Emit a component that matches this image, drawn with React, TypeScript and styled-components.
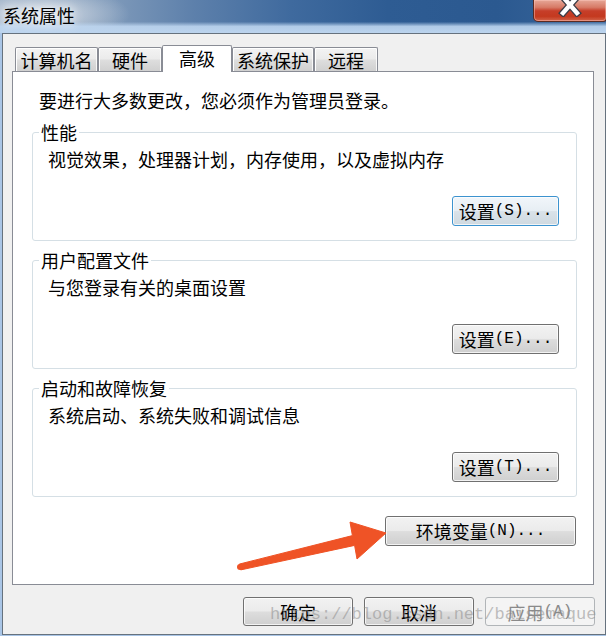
import React from "react";
import styled, { createGlobalStyle, css } from "styled-components";

const GlobalStyle = createGlobalStyle`
  html, body { margin: 0; padding: 0; background: #f0f0f0; }
  body {
    width: 606px; height: 636px; overflow: hidden;
    font-family: "Noto Sans CJK SC", "Microsoft YaHei", sans-serif;
    color: #000;
  }
  * { box-sizing: border-box; }
`;

const Window = styled.div`
  position: relative;
  width: 606px;
  height: 636px;
  display: flex;
  flex-direction: column;
  background: #a9c5e6;
  overflow: hidden;
`;

const TitleBar = styled.div`
  flex: none;
  height: 33px;
  display: flex;
  justify-content: space-between;
  align-items: flex-start;
  background:
    linear-gradient(to bottom, rgba(190, 214, 240, 0) 0%, rgba(190, 214, 240, 0) 66%, rgba(190, 214, 240, 0.9) 80%, #bcd4ee 100%),
    radial-gradient(ellipse 90px 28px at 40px 14px, rgba(225, 230, 236, 0.95), rgba(225, 230, 236, 0) 100%),
    linear-gradient(to right, #8fa6c0 0%, #7f9aba 18%, #5d80ab 32%, #3f6a9e 48%, #2e5c93 64%, #2b5990 82%, #3a679c 100%);
`;

const Title = styled.div`
  padding: 4px 0 0 3px;
  font-size: 18px;
  line-height: 22px;
  color: #000;
  text-shadow: 0 0 8px rgba(255, 255, 255, 0.95), 0 0 14px rgba(255, 255, 255, 0.8);
`;

const CloseButton = styled.div`
  width: 74px;
  height: 22px;
  margin-right: -1px;
  display: flex;
  justify-content: center;
  align-items: flex-start;
  border: 1px solid #5b2a22;
  border-top: none;
  border-radius: 0 0 4px 5px;
  background: linear-gradient(to bottom, #e6a797 0%, #d77a66 35%, #c63e29 52%, #c4391f 78%, #d2644a 100%);
  box-shadow: inset 0 0 0 1px rgba(255, 205, 195, 0.45);
`;

const Body = styled.div`
  flex: 1;
  margin: 0 0 1px 2px;
  border: 1px solid #66727e;
  background: #f0f0f0;
  display: flex;
  flex-direction: column;
  padding: 11px 11px 8px 9px;
`;

const TabStrip = styled.div`
  flex: none;
  height: 26px;
  display: flex;
  align-items: flex-end;
  padding-left: 3px;
`;

const Tab = styled.div<{ $w: number; $active?: boolean }>`
  width: ${(p) => p.$w}px;
  height: 24px;
  display: flex;
  align-items: center;
  justify-content: center;
  border: 1px solid #898c95;
  border-bottom: none;
  border-radius: 2px 2px 0 0;
  background: linear-gradient(to bottom, #f3f3f3 0%, #ebebeb 48%, #dedede 52%, #d0d0d0 100%);
  box-shadow: inset 1px 1px 0 #fff, inset -1px 0 0 rgba(255, 255, 255, 0.8);
  font-size: 18px;
  line-height: 22px;
  white-space: nowrap;
  ${(p) =>
    p.$active &&
    css`
      position: relative;
      z-index: 1;
      height: 27px;
      margin-bottom: -1px;
      padding-bottom: 3px;
      background: #fff;
      box-shadow: none;
    `}
`;

const Panel = styled.div`
  flex: 1;
  display: flex;
  flex-direction: column;
  background: #fff;
  border: 1px solid #898c95;
  padding: 0 16px 0 19px;
`;

const Intro = styled.div`
  margin: 16px 0 0 7px;
  height: 24px;
  font-size: 18px;
  line-height: 24px;
  white-space: nowrap;
`;

const GroupStack = styled.div`
  margin-top: 10px;
  display: flex;
  flex-direction: column;
  gap: 9px;
`;

const Group = styled.fieldset`
  margin: 0;
  min-width: 0;
  padding: 0 17px 14px 0;
  border: 1px solid #d5dfe5;
  border-radius: 3px;
  display: flex;
  flex-direction: column;
`;

const Legend = styled.legend`
  margin-left: 6px;
  padding: 0 2px;
  font-size: 18px;
  line-height: 20px;
`;

const GroupText = styled.div`
  margin: 6px 0 0 15px;
  font-size: 18px;
  line-height: 22px;
  white-space: nowrap;
`;

type Tone = "normal" | "focused" | "disabled";

const Button = styled.button<{ $w: number; $h?: number; $tone?: Tone }>`
  flex: none;
  width: ${(p) => p.$w}px;
  height: ${(p) => p.$h ?? 30}px;
  padding: 0;
  display: flex;
  align-items: center;
  justify-content: center;
  border: 1px solid #707070;
  border-radius: 3px;
  background: linear-gradient(to bottom, #f2f2f2 0%, #ebebeb 48%, #dddddd 52%, #cfcfcf 100%);
  box-shadow: inset 0 0 0 1px rgba(255, 255, 255, 0.75);
  font-family: "Noto Sans CJK SC", sans-serif;
  font-size: 18px;
  line-height: 22px;
  color: #000;
  white-space: nowrap;
  ${(p) =>
    p.$tone === "focused" &&
    css`
      border-color: #3c93cf;
      background: linear-gradient(to bottom, #f1f6fa 0%, #e7eef4 48%, #d9e2e9 52%, #cfd9e0 100%);
      box-shadow: inset 0 0 0 1px rgba(255, 255, 255, 0.7);
    `}
  ${(p) =>
    p.$tone === "disabled" &&
    css`
      border-color: #b1b5b8;
      background: #f4f4f4;
      box-shadow: none;
      color: #8a8a8a;
    `}
`;

const GroupButton = styled(Button)`
  align-self: flex-end;
  margin-top: 26px;
`;

const EnvButton = styled(Button)`
  align-self: flex-end;
  margin: 19px 1px 0 0;
`;

const Accel = styled.span`
  font-family: "Liberation Mono", monospace;
  font-size: 16px;
`;

const DialogButtons = styled.div`
  flex: none;
  margin: 12px -1px 0 0;
  display: flex;
  justify-content: flex-end;
  gap: 11px;
`;

const ArrowMark = styled.svg`
  position: absolute;
  left: 230px;
  top: 512px;
  width: 170px;
  height: 64px;
  pointer-events: none;
`;

const Watermark = styled.div`
  position: absolute;
  left: 270px;
  top: 604px;
  font-family: "Liberation Mono", monospace;
  font-size: 17px;
  line-height: 22px;
  color: rgba(140, 140, 140, 0.55);
  white-space: nowrap;
  pointer-events: none;
`;

const tabs = [
  { label: "计算机名", w: 83 },
  { label: "硬件", w: 64 },
  { label: "高级", w: 70, active: true },
  { label: "系统保护", w: 82 },
  { label: "远程", w: 64 },
];

const groups: { title: string; text: string; key: string; tone: Tone }[] = [
  { title: "性能", text: "视觉效果，处理器计划，内存使用，以及虚拟内存", key: "S", tone: "focused" },
  { title: "用户配置文件", text: "与您登录有关的桌面设置", key: "E", tone: "normal" },
  { title: "启动和故障恢复", text: "系统启动、系统失败和调试信息", key: "T", tone: "normal" },
];

function CloseGlyph() {
  return (
    <svg width="24" height="17" viewBox="0 0 24 17">
      <path d="M5 -3 L19 13 M19 -3 L5 13" stroke="#3d3d46" strokeWidth="7" strokeLinecap="square" />
      <path d="M5 -3 L19 13 M19 -3 L5 13" stroke="#ffffff" strokeWidth="4.4" strokeLinecap="square" />
    </svg>
  );
}

export default function App() {
  return (
    <>
      <GlobalStyle />
      <Window>
        <TitleBar>
          <Title>系统属性</Title>
          <CloseButton aria-label="关闭">
            <CloseGlyph />
          </CloseButton>
        </TitleBar>
        <Body>
          <TabStrip>
            {tabs.map((t) => (
              <Tab key={t.label} $w={t.w} $active={t.active}>
                {t.label}
              </Tab>
            ))}
          </TabStrip>
          <Panel>
            <Intro>要进行大多数更改，您必须作为管理员登录。</Intro>
            <GroupStack>
              {groups.map((g) => (
                <Group key={g.title}>
                  <Legend>{g.title}</Legend>
                  <GroupText>{g.text}</GroupText>
                  <GroupButton $w={107} $tone={g.tone}>
                    设置<Accel>({g.key})...</Accel>
                  </GroupButton>
                </Group>
              ))}
            </GroupStack>
            <EnvButton $w={191}>
              环境变量<Accel>(N)...</Accel>
            </EnvButton>
          </Panel>
          <DialogButtons>
            <Button $w={110} $h={29}>确定</Button>
            <Button $w={110} $h={29}>取消</Button>
            <Button $w={110} $h={29} $tone="disabled">
              应用<Accel>(A)</Accel>
            </Button>
          </DialogButtons>
        </Body>
        <ArrowMark viewBox="0 0 170 64">
          <path
            d="M9.3 52.1 L122.4 23.6 L120 10 L156 21 L127 47 L124.6 33.4 L10.7 57.9 Z"
            fill="#ef5326"
            stroke="#ef5326"
            strokeWidth="1"
            strokeLinejoin="round"
          />
          <circle cx="10" cy="55" r="3" fill="#ef5326" />
        </ArrowMark>
        <Watermark>https://blog.csdn.net/baisemaque</Watermark>
      </Window>
    </>
  );
}
